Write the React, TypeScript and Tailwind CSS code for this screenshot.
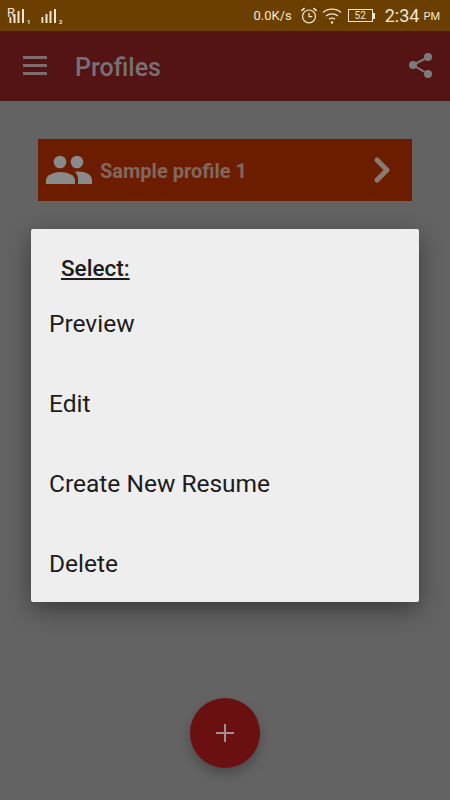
import { ChevronRight } from "lucide-react";

/* ---------------- Status bar icons ---------------- */

function Signal({ sim, roaming }: { sim: string; roaming?: boolean }) {
    return (
        <svg width="30" height="26" viewBox="0 0 30 26" className="text-[#f1e6d0]">
            {roaming && <text x="0" y="14" fontSize="13" fill="currentColor" fontFamily="Roboto, sans-serif">R</text>}
            <rect x="2.500" y="14" width="1.800" height="6" fill="currentColor" />
            <rect x="6.500" y="11" width="2" height="9" fill="currentColor" />
            <rect x="10.500" y="8" width="2" height="12" fill="currentColor" />
            <rect x="15" y="6" width="2" height="14" fill="currentColor" />
            <text x="20" y="21" fontSize="6" fontWeight="700" fill="currentColor" fontFamily="Roboto, sans-serif">{sim}</text>
        </svg>
    );
}

function Alarm() {
    return (
        <svg width="18" height="19" viewBox="0 0 19 19" fill="none" stroke="#f1e6d0" strokeWidth="1.3">
            <circle cx="9.500" cy="10.500" r="6.800" />
            <path d="M9.500 6.500v4.300h3.400" />
            <path d="M1.500 4.600 4.800 1.800M17.500 4.600 14.200 1.800" strokeWidth="1.800" />
        </svg>
    );
}

function Wifi() {
    return (
        <svg width="20" height="18" viewBox="0 0 20 18" fill="none" stroke="#f1e6d0" strokeWidth="1.3">
            <path d="M1 5.500c5-4.400 13-4.400 18 0" />
            <path d="M4 9c3.400-2.800 8.600-2.800 12 0" />
            <path d="M7 12.200c1.800-1.300 4.200-1.300 6 0" />
            <circle cx="10" cy="15.500" r="1.200" fill="#f1e6d0" stroke="none" />
        </svg>
    );
}

function Battery() {
    return (
        <div className="flex items-center">
            <div className="flex h-[13px] w-[25px] items-center justify-center border border-[#f1e6d0] text-[10px] leading-none text-[#f1e6d0]">52</div>
            <div className="h-[6px] w-[2px] bg-[#f1e6d0]" />
        </div>
    );
}

/* ---------------- Page icons ---------------- */

function ShareIcon() {
    return (
        <svg width="26" height="28" viewBox="0 0 26 28" fill="#7b7b7b" stroke="none">
            <path d="M21 5 6 13l15 9" fill="none" stroke="#7b7b7b" strokeWidth="2" />
            <circle cx="21" cy="5" r="4" />
            <circle cx="6" cy="13" r="4" />
            <circle cx="21" cy="22" r="4" />
        </svg>
    );
}

function PeopleIcon() {
    return (
        <svg width="46" height="32" viewBox="0 0 46 32" fill="#8a8a8a">
            <circle cx="14" cy="8" r="6.300" />
            <circle cx="31" cy="8" r="6.300" />
            <path d="M0 30v-4c0-5 8-8 14.500-8s14.500 3 14.500 8v4z" />
            <path d="M29 18c7-1.500 17 1.500 17 8v4H32v-5c0-3-1-5-3-7z" />
        </svg>
    );
}

/* ---------------- Page ---------------- */

const options = ["Preview", "Edit", "Create New Resume", "Delete"];

export default function App() {
    return (
        <div className="relative flex h-[800px] w-[450px] flex-col overflow-hidden bg-[#636363] font-['Roboto',sans-serif]">

            {/* Status bar */}
            <div className="flex h-[31px] items-center justify-between bg-[#6b3f00] pl-[7px] pr-[10px]">
                <div className="flex items-center gap-[2px]">
                    <Signal sim="1" roaming />
                    <Signal sim="2" />
                </div>
                <div className="flex items-center text-[#f1e6d0]">
                    <span className="mr-[8px] text-[13px]">0.0K/s</span>
                    <Alarm />
                    <span className="w-[4px]" />
                    <Wifi />
                    <span className="w-[6px]" />
                    <Battery />
                    <span className="ml-[10px] text-[18px] leading-none">2:34</span>
                    <span className="ml-[4px] mt-[3px] text-[11px]">PM</span>
                </div>
            </div>

            {/* Toolbar */}
            <div className="flex h-[70px] items-center border-b border-[#4b1616] bg-[#541414] pl-[23px] pr-[17px]">
                <div className="flex w-[24px] flex-col gap-[5px]">
                    <span className="h-[3px] bg-[#7d6b6d]" />
                    <span className="h-[3px] bg-[#7d6b6d]" />
                    <span className="h-[3px] bg-[#7d6b6d]" />
                </div>
                <h1 className="ml-[28px] mt-[5px] flex-1 text-[25px] font-medium text-[#787074]">Profiles</h1>
                <ShareIcon />
            </div>

            {/* Profile row */}
            <div className="mx-[38px] mt-[38px] flex h-[62px] items-center bg-[#6c1d00] pl-[8px] pr-[10px]">
                <PeopleIcon />
                <span className="ml-[8px] mt-[2px] flex-1 text-[20px] font-bold text-[#80685f]">Sample profile 1</span>
                <ChevronRight size={40} strokeWidth={3} className="text-[#8a7a74]" />
            </div>

            {/* Dialog */}
            <div className="absolute left-[31px] top-[229px] h-[373px] w-[388px] rounded-[2px] bg-[#eeeeee] shadow-[0_8px_24px_rgba(0,0,0,0.4)]">
                <p className="ml-[30px] mt-[24px] text-[22.500px] leading-[30px] font-medium text-[#1c1c1c] underline underline-offset-2">Select:</p>
                <div className="mt-[1px]">
                    {options.map((o) => (
                        <div key={o} className="flex h-[80px] items-center pl-[18px] text-[24.500px] text-[#1c1c1c]">{o}</div>
                    ))}
                </div>
            </div>

            {/* Add button */}
            <button className="absolute left-[190px] top-[698px] flex h-[70px] w-[70px] items-center justify-center rounded-full bg-[#6b1010] shadow-[0_6px_12px_rgba(0,0,0,0.25)]">
                <svg width="18" height="18" viewBox="0 0 18 18" stroke="#a09090" strokeWidth="2">
                    <path d="M9 0v18M0 9h18" />
                </svg>
            </button>
        </div>
    );
}
